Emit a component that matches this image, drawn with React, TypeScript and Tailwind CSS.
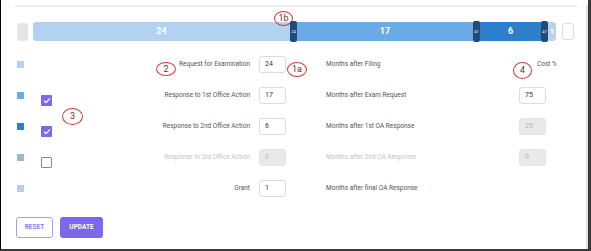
import React from "react";

const font = { fontFamily: "Roboto, 'Noto Sans', sans-serif" };

function Circle({ label, className }: { label: string; className: string }) {
  return (
    <div
      className={`absolute flex items-center justify-center rounded-[50%] border border-[#d23a3a] text-[9px] leading-none text-[#7a2a2a] ${className}`}
    >
      {label}
    </div>
  );
}

function Check({ checked }: { checked: boolean }) {
  if (checked)
    return (
      <div className="flex h-[11px] w-[11px] items-center justify-center rounded-[1px] bg-[#7b68ee]">
        <svg width="8" height="7" viewBox="0 0 8 7">
          <path d="M1 3.8 L3 5.6 L7 1.4" stroke="white" strokeWidth="1.3" fill="none" />
        </svg>
      </div>
    );
  return <div className="h-[11px] w-[11px] rounded-[1px] border border-[#8a8a8a] bg-white" />;
}

function Field({ value, disabled }: { value: string; disabled?: boolean }) {
  return (
    <div
      className={`flex h-[17px] w-[27px] items-center rounded-[3px] border pl-[5px] text-[7px] ${
        disabled ? "border-[#e4e4e4] bg-[#e9e9e9] text-[#b8b8b8]" : "border-[#dcdcdc] bg-white text-[#333]"
      }`}
    >
      {value}
    </div>
  );
}

type Row = {
  color: string;
  check?: boolean | null;
  label: string;
  value: string;
  disabled?: boolean;
  right: string;
  rightValue?: string;
  rightDisabled?: boolean;
  rightMuted?: boolean;
};

const rows: Row[] = [
  { color: "bg-[#b1d2f0]", check: null, label: "Request for Examination", value: "24", right: "Months after Filing" },
  { color: "bg-[#6aabe6]", check: true, label: "Response to 1st Office Action", value: "17", right: "Months after Exam Request", rightValue: "75" },
  { color: "bg-[#2e7fca]", check: true, label: "Response to 2nd Office Action", value: "6", right: "Months after 1st OA Response", rightValue: "25", rightDisabled: true },
  { color: "bg-[#a2b5c9]", check: false, label: "Response to 3rd Office Action", value: "0", disabled: true, right: "Months after 2nd OA Response", rightValue: "0", rightDisabled: true, rightMuted: true },
  { color: "bg-[#bacfe3]", check: null, label: "Grant", value: "1", right: "Months after final OA Response" },
];

function Handle({ n }: { n: string }) {
  return (
    <div className="z-10 flex h-[21px] w-[7px] shrink-0 items-center justify-center rounded-[2px] bg-[#1d4b7b] text-[4px] leading-none text-white">
      {n}
    </div>
  );
}

export default function App() {
  return (
    <div
      className="h-[251px] w-[591px] overflow-hidden border-b-[2px] border-l border-r-[3px] border-b-[#3a3a3a] border-l-black border-r-[#3a3a3a] bg-white"
      style={font}
    >
      <div className="relative h-full w-full border-b-[4px] border-r-[2px] border-b-[#e2e2e2] border-r-[#e2e2e2]">
        <div className="ml-[14px] mt-[5px] h-[2px] w-[562px] bg-[#efefef]" />
        {/* bar */}
        <div className="ml-[16px] mt-[14px] flex h-[21px] items-center">
          <div className="h-[18px] w-[11px] rounded-[3px] bg-[#e5e5e5]" />
          <div className="ml-[5px] flex h-[21px] items-center">
            <div className="flex h-[19px] w-[257px] items-center justify-center rounded-l-[3px] bg-[#b1d2f0] text-[9px] font-bold text-white">
              24
            </div>
            <Handle n="24" />
            <div className="flex h-[19px] w-[176px] items-center justify-center bg-[#6aabe6] text-[9px] font-bold text-white">
              17
            </div>
            <Handle n="41" />
            <div className="flex h-[19px] w-[61px] items-center justify-center bg-[#2e7fca] text-[9px] font-bold text-white">
              6
            </div>
            <Handle n="47" />
            <div className="flex h-[19px] w-[8px] items-center justify-center rounded-r-[3px] bg-[#bfd3e7] text-[8px] font-bold text-white">
              1
            </div>
          </div>
          <div className="ml-[6px] h-[17px] w-[12px] rounded-[3px] border border-[#dddddd] bg-white" />
        </div>
        {/* rows */}
        <div className="mt-[7px] flex flex-col">
          {rows.map((r, i) => (
            <div key={i} className="flex h-[31px] items-center pl-[16px]">
              <div className="w-[24px]">
                <div className={`h-[7px] w-[7px] ${r.color}`} />
              </div>
              <div className="mt-[9px] w-[11px]">{r.check !== null && r.check !== undefined ? <Check checked={r.check} /> : null}</div>
              <div
                className={`w-[198px] text-right text-[6.5px] ${r.disabled ? "text-[#c4c4c4]" : "text-[#555]"}`}
              >
                {r.label}
              </div>
              <div className="ml-[9px]">
                <Field value={r.value} disabled={r.disabled} />
              </div>
              <div className={`ml-[40px] w-[193px] text-[6.5px] ${r.rightMuted ? "text-[#c4c4c4]" : "text-[#555]"}`}>
                {r.right}
              </div>
              {r.rightValue !== undefined ? (
                <Field value={r.rightValue} disabled={r.rightDisabled} />
              ) : i === 0 ? (
                <div className="ml-[18px] text-[6.5px] text-[#555]">Cost %</div>
              ) : null}
            </div>
          ))}
        </div>
        {/* buttons */}
        <div className="ml-[15px] mt-[13px] flex gap-[7px]">
          <div className="flex h-[21px] w-[37px] items-center justify-center rounded-[3px] border border-[#a99cf2] text-[6.5px] font-bold text-[#8c7ef0]">
            RESET
          </div>
          <div className="flex h-[21px] w-[43px] items-center justify-center rounded-[3px] bg-[#7b68ee] text-[6.5px] font-bold text-white">
            UPDATE
          </div>
        </div>
        {/* annotations */}
        <Circle label="1b" className="left-[273px] top-[6px] h-[15px] w-[19px]" />
        <Circle label="2" className="left-[155px] top-[57px] h-[14px] w-[20px]" />
        <Circle label="1a" className="left-[286px] top-[57px] h-[15px] w-[20px]" />
        <Circle label="4" className="left-[512px] top-[57px] h-[17px] w-[19px]" />
        <Circle label="3" className="left-[61px] top-[103px] h-[17px] w-[21px]" />
      </div>
    </div>
  );
}
